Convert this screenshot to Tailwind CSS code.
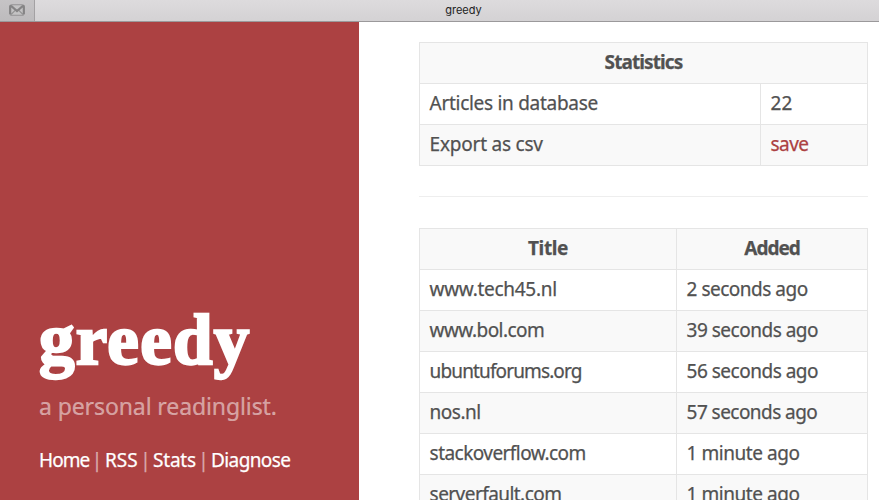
<!DOCTYPE html>
<html lang="en">
<head>
<meta charset="utf-8">
<title>greedy</title>
<script src="https://cdn.jsdelivr.net/npm/@tailwindcss/browser@4"></script>
</head>
<body class="h-[500px] overflow-hidden bg-white flex flex-col font-['Noto_Sans',sans-serif] text-[#515151]">
<header class="h-[22px] shrink-0 flex border-b border-[#9b999b] bg-linear-to-b from-[#dddbdd] to-[#d4d2d4]">
  <div class="w-[35px] border-r border-[#a3a1a3] bg-linear-to-b from-[#c6c4c6] to-[#bdbbbd] flex justify-center pt-[4px]">
    <svg class="w-4 h-3" viewBox="0 0 16 12" fill="none">
      <rect x=".75" y=".75" width="14.5" height="10.5" rx="2.2" fill="#c4c3c4" stroke="#949394" stroke-width="1.2"/>
      <path d="M2 10.5 6.2 6.3M14 10.5 9.8 6.3" stroke="#949394" stroke-width="1.2"/>
      <path d="M1.2 10V3.2Q1.2 1.4 2.4 2.2L8 7l5.600-4.800Q14.800 1.400 14.800 3.200V10" stroke="#858485" stroke-width="2.1"/>
    </svg>
  </div>
  <div class="flex-1 text-center text-[11px] leading-[20px] text-[#222] pl-[13px] font-['Inter',sans-serif]">greedy</div>
</header>
<div class="flex flex-1 min-h-0">
  <aside class="w-[359px] shrink-0 bg-[#ac4142] flex flex-col justify-end pl-[39px] pb-[25px]">
    <h1 class="font-['Liberation_Serif',serif] font-bold text-[71px] leading-[70px] tracking-[1.3px] text-white [-webkit-text-stroke:2.400px_#fff]">greedy</h1>
    <p class="mt-[16px] text-[23px] leading-[30px] tracking-[-0.1px] text-white/50 whitespace-nowrap [-webkit-text-stroke:0.200px]">a personal readinglist.</p>
    <nav class="mt-[24px] flex text-[19px] leading-[30px] text-white whitespace-nowrap [-webkit-text-stroke:0.250px]">
      <a class="w-[50px] tracking-[-0.95px]">Home</a><span class="w-[16px] text-center text-white/50">|</span><a class="w-[33px]">RSS</a><span class="w-[15px] text-center text-white/50">|</span><a class="w-[43px] tracking-[-0.2px]">Stats</a><span class="w-[15px] text-center text-white/50">|</span><a class="tracking-[-0.6px]">Diagnose</a>
    </nav>
  </aside>
  <main class="pl-[60px] pt-[20px] text-[19px] leading-[30px] whitespace-nowrap [-webkit-text-stroke:0.250px] [&_td]:border [&_td]:border-[#e5e5e5] [&_td]:h-[41px] [&_td]:pl-[9.600px] [&_td]:pt-0 [&_td]:pb-[2px] [&_th]:border [&_th]:border-[#e5e5e5] [&_th]:h-[41px] [&_th]:px-0 [&_th]:pt-0 [&_th]:pb-[2px]">
    <table class="table-fixed border-collapse w-[449px]">
      <colgroup><col class="w-[341px]"><col class="w-[107px]"></colgroup>
      <tr class="bg-[#f9f9f9]"><th colspan="2" class="tracking-[-0.9px]">Statistics</th></tr>
      <tr><td class="tracking-[-0.29px]">Articles in database</td><td>22</td></tr>
      <tr class="bg-[#f9f9f9]"><td class="tracking-[-0.22px]">Export as csv</td><td class="tracking-[-0.6px] text-[#ac4142]">save</td></tr>
    </table>
    <hr class="mt-[30px] mb-[31px] border-[#eee]">
    <table class="table-fixed border-collapse w-[449px]">
      <colgroup><col class="w-[257px]"><col class="w-[191px]"></colgroup>
      <tr class="bg-[#f9f9f9]"><th class="tracking-[-0.4px]">Title</th><th class="tracking-[-1px]">Added</th></tr>
      <tr><td class="tracking-[-0.3px]">www.tech45.nl</td><td class="tracking-[-0.5px]">2 seconds ago</td></tr>
      <tr class="bg-[#f9f9f9]"><td class="tracking-[-0.55px]">www.bol.com</td><td class="tracking-[-0.5px]">39 seconds ago</td></tr>
      <tr><td class="tracking-[-0.87px]">ubuntuforums.org</td><td class="tracking-[-0.5px]">56 seconds ago</td></tr>
      <tr class="bg-[#f9f9f9]"><td class="tracking-[-0.5px]">nos.nl</td><td class="tracking-[-0.55px]">57 seconds ago</td></tr>
      <tr><td class="tracking-[-0.55px]">stackoverflow.com</td><td class="tracking-[-0.45px]">1 minute ago</td></tr>
      <tr class="bg-[#f9f9f9]"><td class="tracking-[-0.55px]">serverfault.com</td><td class="tracking-[-0.45px]">1 minute ago</td></tr>
    </table>
  </main>
</div>
</body>
</html>
